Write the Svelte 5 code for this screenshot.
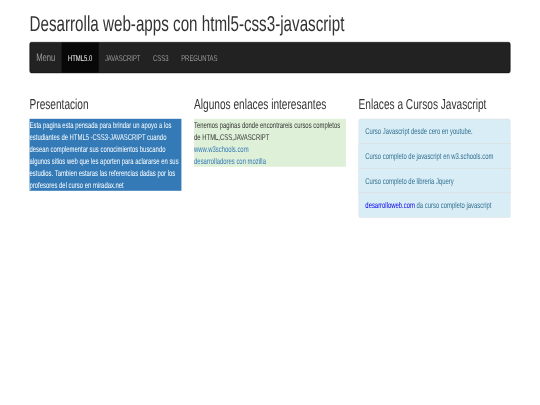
<script lang="ts">
  const navItems = ['HTML5.0', 'JAVASCRIPT', 'CSS3', 'PREGUNTAS']
  const courses = [
    'Curso Javascript desde cero en youtube.',
    'Curso completo de javascript en w3.schools.com',
    'Curso completo de libreria Jquery',
  ]
</script>

<!-- laid out at 1280x675 and squeezed into the 540x405 window -->
<div class="viewport">
  <div class="page">
    <div class="container">
      <h1>Desarrolla web-apps con html5-css3-javascript</h1>

      <nav class="navbar">
        <span class="brand">Menu</span>
        {#each navItems as item, i}
          <a href="#top" class="nav-link" class:active={i === 0}>{item}</a>
        {/each}
      </nav>

      <div class="row">
        <section>
          <h3>Presentacion</h3>
          <p class="box blue">Esta pagina esta pensada para brindar un apoyo a los estudiantes de HTML5 -CSS3-JAVASCRIPT cuando desean complementar sus conocimientos buscando algunos sitios web que les aporten para aclararse en sus estudios. Tambien estaras las referencias dadas por los profesores del curso en miradax.net</p>
        </section>

        <section>
          <h3>Algunos enlaces interesantes</h3>
          <div class="box green">
            <div>Tenemos paginas donde encontrareis cursos completos de HTML,CSS,JAVASCRIPT</div>
            <a href="#top">www.w3schools.com</a>
            <a href="#top">desarrolladores con mozilla</a>
          </div>
        </section>

        <section>
          <h3>Enlaces a Cursos Javascript</h3>
          <ul class="list">
            {#each courses as course}
              <li>{course}</li>
            {/each}
            <li><a href="#top">desarrolloweb.com</a> da curso completo javascript</li>
          </ul>
        </section>
      </div>
    </div>
  </div>
</div>

<style>
  :global(body) {
    margin: 0;
    background: #fff;
    font-family: "Liberation Sans", Arial, sans-serif;
    font-size: 14px;
    line-height: 20px;
    color: #333;
  }
  .viewport {
    height: 405px;
    overflow: hidden;
  }
  .page {
    width: 1280px;
    height: 675px;
    transform: scale(0.421875, 0.6);
    transform-origin: 0 0;
    filter: blur(0.7px);
    text-rendering: geometricPrecision;
  }
  .container {
    width: 1140px;
    margin: 0 auto;
    padding-top: 20px;
  }
  h1 {
    margin: 0 0 10px;
    font-size: 36px;
    line-height: 39.6px;
    font-weight: 500;
  }
  .navbar {
    display: flex;
    height: 52px;
    box-sizing: border-box;
    margin-bottom: 40px;
    background: #222;
    border: 1px solid #080808;
    border-radius: 4px;
  }
  .brand {
    padding: 15px;
    font-size: 18px;
    color: #9d9d9d;
  }
  .nav-link {
    padding: 15px;
    color: #9d9d9d;
    text-decoration: none;
  }
  .nav-link.active {
    color: #fff;
    background: #080808;
  }
  .row {
    display: grid;
    grid-template-columns: repeat(3, 360px);
    column-gap: 30px;
  }
  h3 {
    margin: 0 0 10px;
    font-size: 24px;
    line-height: 26.4px;
    font-weight: 500;
  }
  .box {
    margin: 0;
  }
  .blue {
    background: #337ab7;
    color: #fff;
  }
  .green {
    background: #dff0d8;
  }
  .green a {
    display: block;
    color: #337ab7;
    text-decoration: none;
  }
  .list {
    margin: 1px 0 0;
    padding: 0;
    list-style: none;
  }
  .list li {
    padding: 10px 15px;
    margin-bottom: -1px;
    background: #d9edf7;
    color: #31708f;
    border: 1px solid #ddd;
  }
  .list li:first-child {
    border-radius: 4px 4px 0 0;
  }
  .list li:last-child {
    margin-bottom: 0;
    border-radius: 0 0 4px 4px;
  }
  .list a {
    color: #00e;
    text-decoration: none;
  }
</style>
